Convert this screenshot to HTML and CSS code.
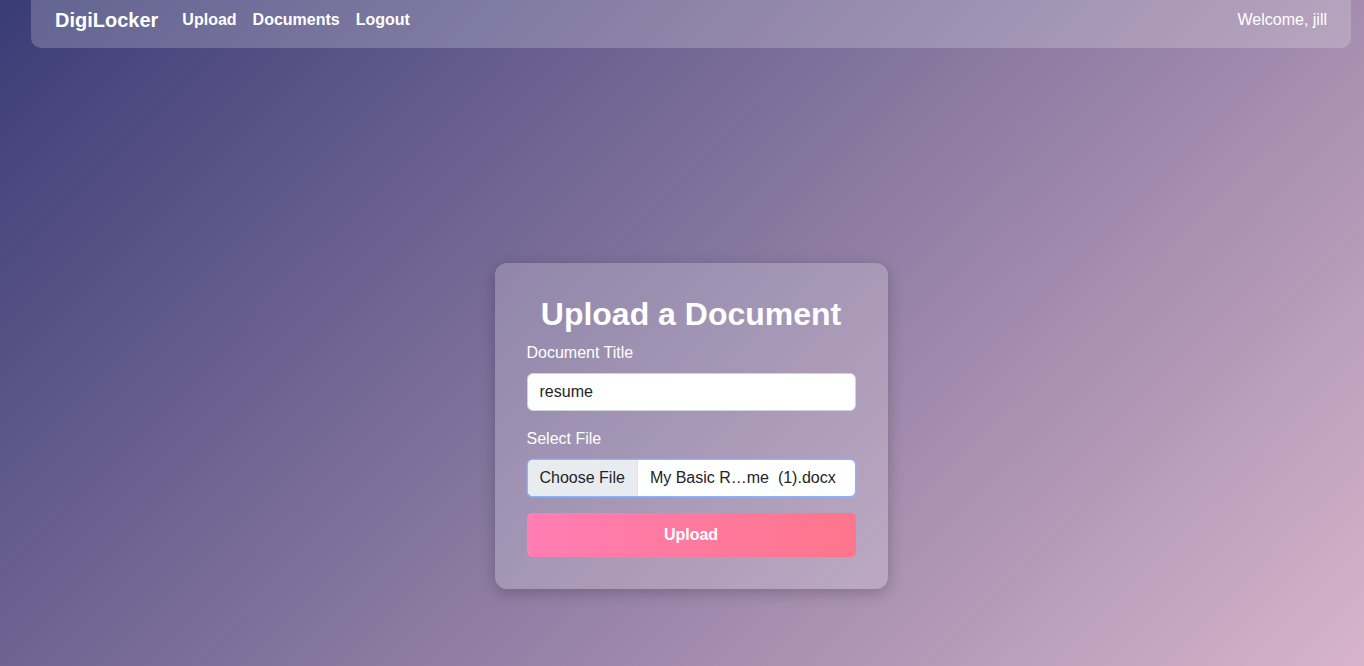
FILE: index.html
```html
<!DOCTYPE html>
<html lang="en">
<head>
<meta charset="utf-8">
<title>DigiLocker - Upload</title>
<link rel="stylesheet" href="styles.css">
</head>
<body>
<div class="page">
  <nav class="navbar">
    <div class="nav-left">
      <a class="brand" href="#">DigiLocker</a>
      <ul class="nav-links">
        <li><a href="#">Upload</a></li>
        <li><a href="#">Documents</a></li>
        <li><a href="#">Logout</a></li>
      </ul>
    </div>
    <span class="welcome">Welcome, jill</span>
  </nav>
  <main class="main">
    <form class="card">
      <h2 class="card-title">Upload a Document</h2>
      <label class="field-label" for="title">Document Title</label>
      <input class="text-input" id="title" type="text" value="resume">
      <label class="field-label" for="file">Select File</label>
      <div class="file-input" id="file">
        <span class="file-btn">Choose File</span>
        <span class="file-name">My Basic R…me&nbsp; (1).docx</span>
      </div>
      <button class="submit-btn" type="button">Upload</button>
    </form>
  </main>
</div>
</body>
</html>
```
FILE: styles.css
```css
* { box-sizing: border-box; }
html, body { height: 100%; }
body {
  margin: 0;
  font-family: "Liberation Sans", Arial, sans-serif;
  font-size: 16px;
  line-height: 1.5;
  color: #fff;
  background: linear-gradient(135deg, #3a3c76 0%, #d7b4ca 100%);
  min-height: 666px;
  overflow: hidden;
}
.page {
  width: 1320px;
  margin-left: 31px;
}
.navbar {
  display: flex;
  align-items: center;
  justify-content: space-between;
  padding: 5px 24px 13px;
  background: rgba(255, 255, 255, 0.2);
  border-radius: 0 0 10px 10px;
}
.nav-left { display: flex; align-items: center; }
.brand {
  font-size: 20px;
  line-height: 30px;
  font-weight: 700;
  color: #fff;
  text-decoration: none;
  margin-right: 24px;
}
.nav-links {
  display: flex;
  gap: 16px;
  list-style: none;
  margin: 0;
  padding: 0;
}
.nav-links a {
  color: #fff;
  font-weight: 700;
  text-decoration: none;
  line-height: 24px;
}
.welcome { color: #fff; line-height: 24px; }
.main {
  display: flex;
  justify-content: center;
  padding-top: 215px;
}
.card {
  width: 393px;
  padding: 32px;
  background: rgba(255, 255, 255, 0.2);
  border-radius: 12px;
  box-shadow: 0 4px 15px rgba(0, 0, 0, 0.22);
  display: flex;
  flex-direction: column;
}
.card-title {
  margin: 0 0 8px;
  font-size: 32px;
  line-height: 1.2;
  font-weight: 700;
  text-align: center;
}
.field-label {
  display: block;
  margin-bottom: 8px;
  line-height: 24px;
}
.text-input {
  display: block;
  width: 100%;
  height: 38px;
  padding: 6px 12px;
  font: inherit;
  color: #212529;
  background: #fff;
  border: 1px solid #ced4da;
  border-radius: 6px;
  margin: 0 0 16px;
  outline: none;
}
.file-input {
  display: flex;
  height: 38px;
  border: 1px solid #86b7fe;
  border-radius: 6px;
  overflow: hidden;
  background: #fff;
  box-shadow: 0 0 0 1px rgba(134, 183, 254, 0.35);
  margin-bottom: 16px;
  color: #212529;
}
.file-btn {
  display: flex;
  align-items: center;
  padding: 0 12px;
  background: #e9ecef;
  border-right: 1px solid #dee2e6;
  white-space: nowrap;
}
.file-name {
  display: flex;
  align-items: center;
  padding: 0 12px;
  white-space: nowrap;
}
.submit-btn {
  height: 44px;
  border: none;
  border-radius: 5px;
  font: inherit;
  font-weight: 700;
  color: #fff;
  background: linear-gradient(90deg, #ff7eb3, #ff758c);
  cursor: pointer;
}
```
